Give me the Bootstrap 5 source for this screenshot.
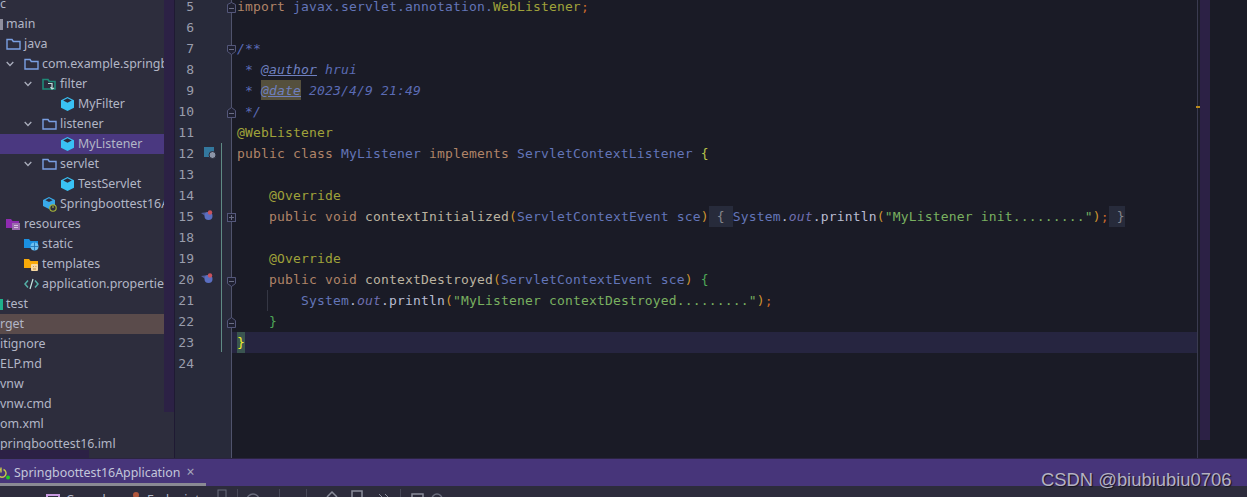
<!DOCTYPE html>
<html lang="en">
<head>
<meta charset="utf-8">
<title>MyListener</title>
<link href="https://cdn.jsdelivr.net/npm/bootstrap@5.3.0/dist/css/bootstrap.min.css" rel="stylesheet">
<style>
html,body{height:497px;overflow:hidden;background:#1a1b26;}
.ide-root{height:497px;width:1247px;}
.ide-main{height:458px;}
.tree-pane{width:175px;background:#2d2d3d;border-right:1px solid #1f1a33;overflow:hidden;position:relative;}
.tree-list{width:164px;flex:none;overflow:hidden;margin-top:-6px;font:12.4px/20px "Noto Sans",sans-serif;color:#b2b6c6;}
.tree-scroll{width:10px;height:412px;background:#2c2145;flex:none;}
.tree-hscroll{position:absolute;left:0;bottom:0;width:89px;height:8px;background:#2c2145;}
.t-row{height:20px;display:flex;align-items:center;white-space:nowrap;overflow:hidden;}
.t-ico{flex:none;margin-right:3px;}
.t-chev{flex:none;margin-right:10px;}
.t-sel{background:#4a3880;}
.t-tgt{background:#5a4b4b;}
.in0{padding-left:0}.in6{padding-left:6px}.in24{padding-left:24px}.in42{padding-left:42px}.in43{padding-left:43px}.in61{padding-left:61px}
.cube{margin-right:4px;}
.stub{width:3px;height:11px;margin-right:3px;flex:none;}
.stub-grey{background:#8f8f9e;}
.stub-teal{background:#1fb08c;}
.gutter{width:57px;flex:none;background:#282a3a;border-right:1px solid #50536c;font:13px/21px "DejaVu Sans Mono",monospace;color:#9a9dac;overflow:hidden;}
.g-col{margin-top:-4px;width:19px;}
.g-row{height:21px;text-align:right;}
.gut-marks{position:absolute;left:175px;top:0;}
.editor{flex:1;background:#1a1b26;font:13px/21px "DejaVu Sans Mono",monospace;letter-spacing:.17px;color:#a9b1d6;min-width:0;overflow:hidden;position:relative;}
.e-col{margin-top:-4px;}
.e-row{height:21px;padding-left:5px;white-space:pre;}
.e-cur{background:#262540;}
.k{color:#b08468}.p{color:#6375b8}.y{color:#a0a23a}.c{color:#5b6bb5;font-style:italic}
.tg{color:#6f80c0;text-decoration:underline;}
.hl{background:#55503d;display:inline-block;height:20px;line-height:21px;}
.fn{color:#bcb3a0}.o{color:#cf9430}.s{color:#79b060}.w{color:#b9bdd2}.g{color:#4fa858}.yb{color:#b8c24a}
.st{font-style:italic;color:#6f6fb0}.sem{color:#c9692b}
.fb{background:#272b3b;display:inline-block;height:21px;color:#85858a}
.br{background:#3a5550;color:#f6f02c;display:inline-block;height:21px;}
.guide{position:absolute;left:35px;top:290px;height:21px;width:1px;background:#353744;}
.right-bar{width:50px;flex:none;display:flex;}
.stripe{width:3px;flex:none;border-left:1px solid #3a3b50;position:relative;}
.mk{position:absolute;left:-2px;top:106px;width:4px;height:2px;background:#b98a1c;}
.v-scroll{width:10px;height:440px;background:#2c2145;}
.tabbar{height:28px;background:#47357a;position:relative;font:12.4px/26px "Noto Sans",sans-serif;color:#c3c6da;border-top:1px solid #2b2440;padding-left:14px;}
.tab-under{position:absolute;left:0;bottom:0;width:206px;height:3px;background:#8a8a94;}
.tab-x{color:#a6a8bc;margin-left:6px;font-size:14px;}
.tab-ico{position:absolute;left:0;top:7px;}
.toolbar{height:11px;background:#2d2c3c;overflow:hidden;font:12.4px/20px "Noto Sans",sans-serif;color:#b2b6c6;padding-left:46px;}
.tool-svg{display:block;flex:none;}
.tool-a{width:67px;padding-left:6px;flex:none;padding-top:4px;}
.tool-b{width:69px;flex:none;padding-left:6px;padding-top:4px;white-space:nowrap;overflow:hidden;}
.watermark{position:absolute;left:1041px;top:469px;font:18.4px/22px "Liberation Sans",sans-serif;color:#b5b2c2;text-shadow:1px 1px 1px #17161f;white-space:nowrap;}
</style>
</head>
<body>
<svg width="0" height="0" class="position-absolute">
  <defs>
    <symbol id="folder" viewBox="0 0 15 12"><path d="M1 1.500h5l1.300 2H14v7.500H1z" fill="none" stroke="#7a9fe2" stroke-width="1.400"/></symbol>
    <symbol id="chev" viewBox="0 0 8 6"><path d="M.7 1l3.300 3.500L7.300 1" fill="none" stroke="#a9adbc" stroke-width="1.300"/></symbol>
    <symbol id="cube" viewBox="0 0 13 14"><path d="M6.500 0L13 3.300v7.400L6.500 14 0 10.700V3.300z" fill="#39c2f5"/><path d="M6.500 1.200l4.300 2.300-4.300 2.200-4.300-2.200z" fill="#2d2d3d"/></symbol>
  </defs>
</svg>
<div class="ide-root d-flex flex-column position-relative">
  <div class="ide-main d-flex">
    <div class="tree-pane d-flex">
      <div class="tree-list">
        <div class="t-row in0">c</div>
        <div class="t-row in0"><span class="stub stub-grey"></span>main</div>
        <div class="t-row in6"><svg class="t-ico" width="15" height="12"><use href="#folder"/></svg>java</div>
        <div class="t-row in6"><svg class="t-chev" width="8" height="6"><use href="#chev"/></svg><svg class="t-ico" width="15" height="12"><use href="#folder"/></svg>com.example.springb</div>
        <div class="t-row in24"><svg class="t-chev" width="8" height="6"><use href="#chev"/></svg><svg class="t-ico" width="15" height="13" viewBox="0 0 15 13"><path d="M1 1.500h5l1.300 2H13v7.500H1z" fill="none" stroke="#1f8a78" stroke-width="1.600"/><path d="M6 5.500h4v5M8.500 9l1.500 2 2-1" fill="none" stroke="#c2e0dc" stroke-width="1.200"/></svg>filter</div>
        <div class="t-row in61"><svg class="cube" width="13" height="14"><use href="#cube"/></svg>MyFilter</div>
        <div class="t-row in24"><svg class="t-chev" width="8" height="6"><use href="#chev"/></svg><svg class="t-ico" width="15" height="12"><use href="#folder"/></svg>listener</div>
        <div class="t-row in61 t-sel"><svg class="cube" width="13" height="14"><use href="#cube"/></svg>MyListener</div>
        <div class="t-row in24"><svg class="t-chev" width="8" height="6"><use href="#chev"/></svg><svg class="t-ico" width="15" height="12"><use href="#folder"/></svg>servlet</div>
        <div class="t-row in61"><svg class="cube" width="13" height="14"><use href="#cube"/></svg>TestServlet</div>
        <div class="t-row in43"><svg class="t-ico" width="14" height="15" viewBox="0 0 14 15"><path d="M6 0l6 3v6l-6 3-6-3V3z" fill="#39a9e8"/><path d="M6 1.200l3.600 2L6 5 2.400 3.200z" fill="#2d2d3d"/><circle cx="10" cy="11" r="3.200" fill="#2d2d3d" stroke="#a9b83a" stroke-width="1.100"/><path d="M10 8.500v2.500" stroke="#a9b83a" stroke-width="1.100"/></svg>Springboottest16A</div>
        <div class="t-row in6"><svg class="t-ico" width="15" height="13" viewBox="0 0 15 13"><path d="M0 1h5l1.500 2H13v7H0z" fill="#8e2bb0"/><rect x="6" y="5" width="8" height="7" fill="#9a6aae"/><path d="M8 7.500h4M8 9.500h4" stroke="#d8c2e0"/></svg>resources</div>
        <div class="t-row in24"><svg class="t-ico" width="15" height="13" viewBox="0 0 15 13"><path d="M0 1h5l1.500 2H14v7H0z" fill="#1a8fe0"/><circle cx="10.500" cy="8.500" r="4" fill="#6dc0f0"/><path d="M6.500 8.500h8M10.500 4.500v8" stroke="#1a6fb0" stroke-width=".8"/></svg>static</div>
        <div class="t-row in24"><svg class="t-ico" width="15" height="13" viewBox="0 0 15 13"><path d="M0 1h5l1.500 2H14v7H0z" fill="#f7a90a"/><rect x="7" y="6" width="7" height="7" rx="1" fill="#f7d8a0"/><path d="M9 8.500h.8M11.500 8.500h.8M9 11h3" stroke="#b98a3c"/></svg>templates</div>
        <div class="t-row in24"><svg class="t-ico" width="15" height="12" viewBox="0 0 15 12"><path d="M4 2.500L1 6l3 3.500M11 2.500L14 6l-3 3.500" fill="none" stroke="#55b0a8" stroke-width="1.500"/><path d="M9 1L6 11" stroke="#c6e4e0" stroke-width="1.200"/></svg>application.propertie</div>
        <div class="t-row in0"><span class="stub stub-teal"></span>test</div>
        <div class="t-row in0 t-tgt">rget</div>
        <div class="t-row in0">itignore</div>
        <div class="t-row in0">ELP.md</div>
        <div class="t-row in0">vnw</div>
        <div class="t-row in0">vnw.cmd</div>
        <div class="t-row in0">om.xml</div>
        <div class="t-row in0">pringboottest16.iml</div>
      </div>
      <div class="tree-scroll"></div>
      <div class="tree-hscroll"></div>
    </div>
    <div class="gutter">
      <div class="g-col">
        <div class="g-row">5</div><div class="g-row">6</div><div class="g-row">7</div><div class="g-row">8</div><div class="g-row">9</div><div class="g-row">10</div><div class="g-row">11</div><div class="g-row">12</div><div class="g-row">13</div><div class="g-row">14</div><div class="g-row">15</div><div class="g-row">18</div><div class="g-row">19</div><div class="g-row">20</div><div class="g-row">21</div><div class="g-row">22</div><div class="g-row">23</div><div class="g-row">24</div>
      </div>
    </div>
    <div class="editor">
      <div class="e-col">
        <div class="e-row"><span class="k">import</span> <span class="p">javax.servlet.annotation.</span><span class="y">WebListener</span><span class="sem">;</span></div>
        <div class="e-row"> </div>
        <div class="e-row"><span class="c">/**</span></div>
        <div class="e-row"><span class="c"> * </span><span class="c tg">@author</span><span class="c"> hrui</span></div>
        <div class="e-row"><span class="c"> * </span><span class="c tg hl">@date</span><span class="c"> 2023/4/9 21:49</span></div>
        <div class="e-row"><span class="c"> */</span></div>
        <div class="e-row"><span class="y">@WebListener</span></div>
        <div class="e-row"><span class="k">public class</span> <span class="p">MyListener</span> <span class="k">implements</span> <span class="p">ServletContextListener</span> <span class="yb">{</span></div>
        <div class="e-row"> </div>
        <div class="e-row">    <span class="y">@Override</span></div>
        <div class="e-row">    <span class="k">public void</span> <span class="fn">contextInitialized</span><span class="o">(</span><span class="p">ServletContextEvent sce</span><span class="o">)</span><span class="fb"> { </span><span class="p">System</span><span class="w">.</span><span class="st">out</span><span class="w">.println</span><span class="o">(</span><span class="s">"MyListener init........."</span><span class="o">)</span><span class="sem">;</span><span class="fb"> }</span></div>
        <div class="e-row"> </div>
        <div class="e-row">    <span class="y">@Override</span></div>
        <div class="e-row">    <span class="k">public void</span> <span class="fn">contextDestroyed</span><span class="o">(</span><span class="p">ServletContextEvent sce</span><span class="o">)</span> <span class="g">{</span></div>
        <div class="e-row">        <span class="p">System</span><span class="w">.</span><span class="st">out</span><span class="w">.println</span><span class="o">(</span><span class="s">"MyListener contextDestroyed........."</span><span class="o">)</span><span class="sem">;</span></div>
        <div class="e-row">    <span class="g">}</span></div>
        <div class="e-row e-cur"><span class="br">}</span></div>
        <div class="e-row"> </div>
      </div>
      <div class="guide"></div>
    </div>
    <div class="right-bar">
      <div class="stripe"><div class="mk"></div></div>
      <div class="v-scroll"></div>
    </div>
    <svg class="gut-marks" width="64" height="458" viewBox="0 0 64 458">
      <path d="M46.500 143V352" stroke="#5f8a84"/>
      <g fill="#262838" stroke="#54577a">
        <path d="M52.500 4.500L56.500 2.500L60.500 4.500V12.500H52.500z" fill="#1f2030"/><path d="M54 8.500h5" stroke="#6a6d84"/>
        <path d="M52.500 45.500H60.500V51.500L56.500 54.500L52.500 51.500z" fill="#1f2030"/><path d="M54 49.500h5" stroke="#6a6d84"/>
        <path d="M52.500 110.500L56.500 107.500L60.500 110.500V117.500H52.500z" fill="#1f2030"/><path d="M54 113.500h5" stroke="#6a6d84"/>
        <rect x="52.500" y="213.500" width="8" height="8" fill="#1f2030"/><path d="M54 217.500h5M56.500 215v5" stroke="#6a6d84"/>
        <path d="M52.500 277.500H60.500V283.500L56.500 286.500L52.500 283.500z" fill="#1f2030"/><path d="M54 281.500h5" stroke="#6a6d84"/>
        <path d="M52.500 320.500L56.500 317.500L60.500 320.500V327.500H52.500z" fill="#1f2030"/><path d="M54 323.500h5" stroke="#6a6d84"/>
      </g>
      <rect x="29" y="147" width="10" height="10" fill="#33789e"/>
      <circle cx="37.500" cy="155" r="3.500" fill="#8d95a8" stroke="#282a3a"/>
      <g>
        <path d="M26 213l7-1v6z" fill="#4e5a98"/><circle cx="33.500" cy="216" r="4" fill="#5a6ec0"/><circle cx="35" cy="212.500" r="2.200" fill="#c9525c"/>
        <path d="M26 276l7-1v6z" fill="#4e5a98"/><circle cx="33.500" cy="279" r="4" fill="#5a6ec0"/><circle cx="35" cy="275.500" r="2.200" fill="#c9525c"/>
      </g>
    </svg>
  </div>
  <div class="tabbar">
    <svg class="tab-ico" width="11" height="14" viewBox="0 0 11 14"><path d="M3.500 3.500a4 4 0 1 1-3 0M1 1.500v5" fill="none" stroke="#c8c84a" stroke-width="1.400"/><circle cx="8" cy="11.500" r="2" fill="#1fd01f"/></svg>
    Springboottest16Application<span class="tab-x">×</span>
    <div class="tab-under"></div>
  </div>
  <div class="toolbar d-flex">
    <svg class="tool-svg" width="14" height="11" viewBox="0 0 14 11"><rect x="1" y="9" width="12" height="6" fill="none" stroke="#c89ae0" stroke-width="2"/></svg>
    <span class="tool-a">Console</span>
    <svg class="tool-svg" width="14" height="11" viewBox="0 0 14 11"><circle cx="9" cy="9" r="3" fill="#b0563c"/></svg>
    <span class="tool-b">Endpoints</span>
    <svg class="tool-svg" width="240" height="11" viewBox="210 0 240 11">
      <rect x="218" y="4" width="8" height="10" fill="none" stroke="#6a6c7c"/>
      <path d="M237.500 3v8M279.500 3v8M306.500 3v8M400.500 3v8" stroke="#474858"/>
      <circle cx="253" cy="14" r="6" fill="none" stroke="#6a6c7c" stroke-width="1.500"/>
      <path d="M327 11l5-5 5 5" fill="none" stroke="#8a8c9a" stroke-width="1.500"/>
      <rect x="352" y="5" width="10" height="9" fill="none" stroke="#8a8c9a" stroke-width="1.500"/>
      <path d="M379 8l3 3M385 8l3 3" fill="none" stroke="#8a8c9a"/>
      <rect x="412" y="8" width="11" height="8" fill="none" stroke="#8a8c9a" stroke-width="1.500"/>
      <circle cx="437" cy="13" r="5" fill="none" stroke="#6a6c7c" stroke-width="1.500"/>
    </svg>
  </div>
  <div class="watermark">CSDN @biubiubiu0706</div>
</div>
</body>
</html>
